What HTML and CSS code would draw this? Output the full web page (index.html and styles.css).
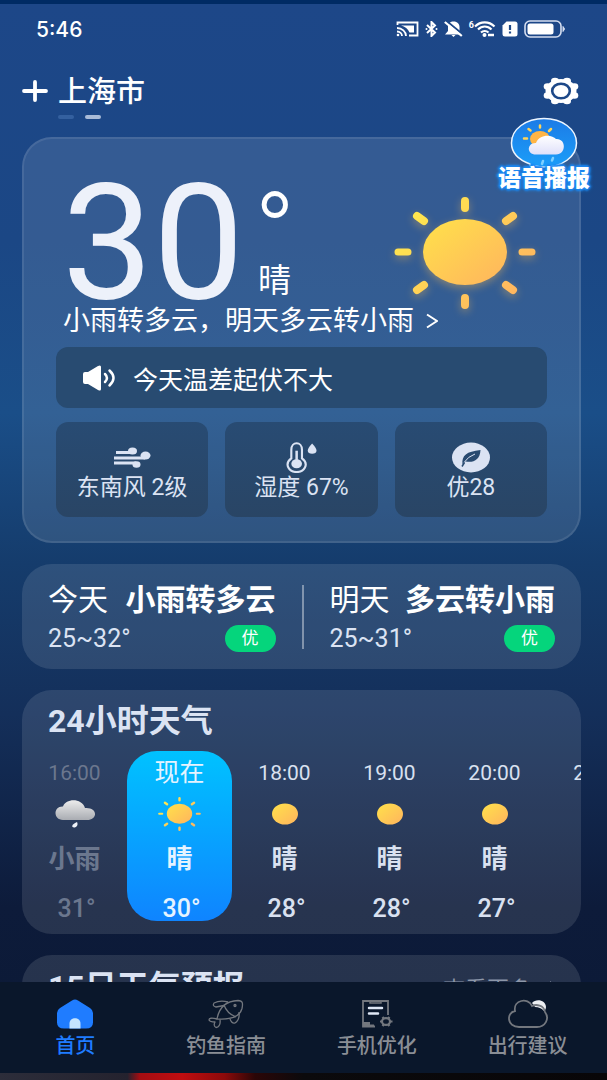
FILE: index.html
```html
<!DOCTYPE html>
<html lang="zh-CN">
<head>
  <title>上海市天气</title>
  <meta charset="UTF-8">
  <meta name="viewport" content="width=device-width, initial-scale=1">
  <link rel="stylesheet" href="styles.css">
</head>
<body>
  <!-- shared gradients and small icons -->
  <svg class="defs" width="0" height="0" aria-hidden="true">
    <defs>
      <linearGradient id="sunFill" x1="0" y1="0" x2="1" y2="1">
        <stop offset="0" stop-color="#ffe24a"/>
        <stop offset="1" stop-color="#ffb45e"/>
      </linearGradient>
      <linearGradient id="rayFill" gradientUnits="userSpaceOnUse" x1="20" y1="10" x2="120" y2="100">
        <stop offset="0" stop-color="#ffe84e"/>
        <stop offset="1" stop-color="#ffb660"/>
      </linearGradient>
      <linearGradient id="cloudFill" x1="0" y1="0" x2="0" y2="1">
        <stop offset="0" stop-color="#ececec"/>
        <stop offset="1" stop-color="#a9acb2"/>
      </linearGradient>
      <linearGradient id="whiteCloud" x1="0" y1="0" x2="0" y2="1">
        <stop offset="0" stop-color="#ffffff"/>
        <stop offset="1" stop-color="#dfe0fa"/>
      </linearGradient>
      <linearGradient id="bubbleFill" x1="0" y1="0" x2="0" y2="1">
        <stop offset="0" stop-color="#1c7be6"/>
        <stop offset="1" stop-color="#1ba0fa"/>
      </linearGradient>
    </defs>
    <symbol id="sun" viewBox="0 0 142 112">
      <g stroke="url(#rayFill)" stroke-linecap="round" stroke-width="8">
        <path d="M71 4v7M71 101v7"/>
        <path d="M4 55h10M128 55h10" stroke-width="7"/>
        <path d="M23 19l7 5M112 88l7 5M119 19l-7 5M30 88l-7 5"/>
      </g>
      <ellipse cx="71" cy="55" rx="42" ry="33" fill="url(#sunFill)"/>
    </symbol>
    <symbol id="sunDot" viewBox="0 0 26 21">
      <ellipse cx="13" cy="10.5" rx="13" ry="10.5" fill="url(#sunFill)"/>
    </symbol>
  </svg>

  <div class="screen">
    <div class="status-bar">
      <span class="clock">5:46</span>
      <div class="status-icons">
        <svg width="23" height="16" viewBox="0 0 23 16" fill="none" stroke="#fff" stroke-width="1.8">
          <path d="M1.500 4V1.500h20v13H13"/>
          <path d="M5 4.500h13v7h-4.500C12 8 9 5.500 5 4.500z" fill="#fff" stroke="none"/>
          <path d="M1 7c5 0 9 3.500 9 8M1 10.500c3 0 5 2 5 4.500" stroke-width="1.800"/>
          <circle cx="2" cy="14" r="1.300" fill="#fff" stroke="none"/>
        </svg>
        <svg width="13" height="16" viewBox="0 0 13 16" fill="none" stroke="#fff" stroke-width="2">
          <path d="M2 4l8 7.500L6.500 15V1L10 4.500 2 12"/>
          <circle cx="1.500" cy="8" r="1" fill="#fff" stroke="none"/>
          <circle cx="11.500" cy="8" r="1" fill="#fff" stroke="none"/>
        </svg>
        <svg width="19" height="16" viewBox="0 0 19 16">
          <path d="M9.500 .5c4 0 6 2.500 6 5.500v4l2.500 3.500H1L4 10V6c0-3 1.500-5.500 5.500-5.500z" fill="#fff"/>
          <path d="M7.500 14h4l-2 2z" fill="#fff"/>
          <path d="M2.500 0l17 14" stroke="#1d4888" stroke-width="2"/>
          <path d="M.8 1l17 14" stroke="#fff" stroke-width="2.200"/>
        </svg>
        <span class="wifi">
          <small>6</small>
          <svg width="22" height="16" viewBox="0 0 22 16" fill="none" stroke="#fff" stroke-width="2.200">
            <path d="M1 5.500c5.500-5.500 14-5.500 19.500 0M4 8.500c4-4 9.500-4 13.500 0M7 11.500c2.200-2 5.300-2 7.500 0"/>
            <circle cx="10.500" cy="14" r="2" fill="#fff" stroke="none"/>
            <path d="M14 14h6" stroke-width="2.500"/>
          </svg>
        </span>
        <svg width="16" height="16" viewBox="0 0 16 16">
          <path d="M4.500 .5h8.500q2.500 0 2.500 2.500v10q0 2.500-2.500 2.500H3Q.5 15.500.5 13V4.500z" fill="#fff"/>
          <path d="M8 4v5M8 10.500v2" stroke="#1d4888" stroke-width="2.200"/>
        </svg>
        <svg width="42" height="18" viewBox="0 0 42 18">
          <rect x="1" y="1" width="36" height="16" rx="5" fill="none" stroke="#d5def0" stroke-width="1.600"/>
          <rect x="3.500" y="3.500" width="26" height="11" rx="2.500" fill="#fff"/>
          <path d="M39 6.500q3 2.500 0 5z" fill="#d5def0" stroke="#d5def0"/>
        </svg>
      </div>
    </div>

    <header class="city-bar">
      <button class="icon-button" type="button" aria-label="添加城市">
        <svg width="26" height="22" viewBox="0 0 26 22" stroke="#fff" stroke-width="3.800" stroke-linecap="round">
          <path d="M13 2v18M2 11h22"/>
        </svg>
      </button>
      <div class="city">
        <h1>上海市</h1>
        <div class="pager"><i></i><i class="current"></i></div>
      </div>
      <button class="icon-button settings" type="button" aria-label="设置">
        <svg width="36" height="28" viewBox="0 0 36 28">
          <g fill="#fff">
            <ellipse cx="18" cy="14" rx="15.500" ry="12"/>
            <ellipse cx="12" cy="4" rx="4" ry="3.300"/>
            <ellipse cx="24" cy="4" rx="4" ry="3.300"/>
            <ellipse cx="31.500" cy="9.500" rx="3.800" ry="3.300"/>
            <ellipse cx="31.500" cy="18.500" rx="3.800" ry="3.300"/>
            <ellipse cx="24" cy="24" rx="4" ry="3.300"/>
            <ellipse cx="12" cy="24" rx="4" ry="3.300"/>
            <ellipse cx="4.500" cy="18.500" rx="3.800" ry="3.300"/>
            <ellipse cx="4.500" cy="9.500" rx="3.800" ry="3.300"/>
          </g>
          <ellipse cx="18" cy="14" rx="8.800" ry="7.300" fill="#fff" stroke="#1d4888" stroke-width="2.600"/>
        </svg>
      </button>
    </header>

    <button class="voice" type="button">
      <svg width="68" height="54" viewBox="0 0 68 54">
        <path d="M34 1.500C52 1.500 66.500 12 66.500 26S52 50 34 50q-5 0-8-1-3 4-7 4 2-3 1-6C9 43 1.500 36 1.500 26 1.500 12 16 1.500 34 1.500z" fill="url(#bubbleFill)" stroke="#eef6ff" stroke-width="1.500"/>
        <g stroke="#ffd45a" stroke-width="2.500" stroke-linecap="round">
          <path d="M30 8.500v2M18.500 12l2 1.500M41 12l-2 2M14 21.500h3"/>
        </g>
        <ellipse cx="30" cy="22" rx="10" ry="8" fill="#ffb545"/>
        <path d="M26 37.500c-10 0-9-12 0-11.500 3-9 16-9 20-4 10-1 11 15 0 15.500z" fill="url(#whiteCloud)"/>
        <path d="M33 44l-1 3M43 41l-1 2.500" stroke="#7fd0ff" stroke-width="2.500" stroke-linecap="round"/>
      </svg>
      <span>语音播报</span>
    </button>

    <main class="content">
      <section class="card now">
        <div class="now-top">
          <div class="temperature">30</div>
          <div class="now-side">
            <span class="degree">°</span>
            <span class="condition">晴</span>
          </div>
          <svg class="big-sun" width="142" height="112"><use href="#sun"/></svg>
        </div>
        <a class="summary" href="#">
          <span>小雨转多云，明天多云转小雨</span>
          <svg width="12" height="16" viewBox="0 0 12 16" fill="none" stroke="#fff" stroke-width="2"><path d="M1 1.500L11 8 1 14.500"/></svg>
        </a>
        <div class="tip">
          <svg width="34" height="26" viewBox="0 0 34 26">
            <path d="M1 9q0-2 2-2h3l10-6q3-1.500 3 1v22q0 2.500-3 1L6 19H3q-2 0-2-2z" fill="#fff"/>
            <path d="M23 9q4 4 0 8M27.500 5.500q8 7.500 0 15" fill="none" stroke="#fff" stroke-width="2.500" stroke-linecap="round"/>
          </svg>
          <span>今天温差起伏不大</span>
        </div>
        <div class="stats">
          <div class="stat">
            <svg width="38" height="30" viewBox="0 0 38 30" fill="none" stroke="#dbe3f3" stroke-width="3">
              <path d="M3 10h16M1 15.500h31M1 20.500h22"/>
              <g fill="#dbe3f3" stroke="none">
                <ellipse cx="19.500" cy="8.500" rx="4.500" ry="3.500"/>
                <ellipse cx="32.500" cy="13" rx="5" ry="4"/>
                <ellipse cx="23.500" cy="22" rx="4" ry="3.300"/>
              </g>
            </svg>
            <span>东南风 2级</span>
          </div>
          <div class="stat">
            <svg width="34" height="32" viewBox="0 0 34 32" fill="none" stroke="#dbe3f3" stroke-width="2.200">
              <path d="M7 17V8c0-9 11-9 11 0v9c8 6 2 14-5.500 14S-1 23 7 17z"/>
              <path d="M12.500 9v12" stroke-width="2.600"/>
              <ellipse cx="12.500" cy="22.500" rx="5.500" ry="4.700" fill="#dbe3f3" stroke="none"/>
              <path d="M28.500 1.500c7 7 5 10.500 0 10.500s-7-3.500 0-10.500z" fill="#dbe3f3" stroke="none"/>
            </svg>
            <span>湿度 67%</span>
          </div>
          <div class="stat">
            <svg width="38" height="30" viewBox="0 0 38 30">
              <ellipse cx="19" cy="15" rx="19" ry="15" fill="#dbe3f3"/>
              <path d="M10.500 22c-1-9 4-13 18-14.500-.5 10-7 13-15 11.500z" fill="#284a70"/>
              <path d="M12 20q4-6 11-8.500" fill="none" stroke="#dbe3f3" stroke-width="1"/>
              <path d="M10 24l2.500-4" stroke="#284a70" stroke-width="1.500"/>
            </svg>
            <span>优28</span>
          </div>
        </div>
      </section>

      <section class="card days">
        <div class="day">
          <div class="day-row"><span>今天</span><strong>小雨转多云</strong></div>
          <div class="day-row"><span class="range">25~32°</span><span class="badge">优</span></div>
        </div>
        <div class="day">
          <div class="day-row"><span>明天</span><strong>多云转小雨</strong></div>
          <div class="day-row"><span class="range">25~31°</span><span class="badge">优</span></div>
        </div>
      </section>

      <section class="card hourly">
        <h2>24小时天气</h2>
        <ul class="hours">
          <li class="past">
            <span class="time">16:00</span>
            <svg width="40" height="36" viewBox="0 0 40 36">
              <path d="M8 24C-2 24-2 10 8 10.500 11 2 27 2 30 12c13-1 13 12 2 12z" fill="url(#cloudFill)"/>
              <path d="M22 26c1.500 3-.5 5.500-3 5.500s-3-3 3-5.500z" fill="#eef2f8"/>
            </svg>
            <b>小雨</b>
            <span class="temp">31°</span>
          </li>
          <li class="present">
            <span class="time">现在</span>
            <svg width="43" height="36"><use href="#sun"/></svg>
            <b>晴</b>
            <span class="temp">30°</span>
          </li>
          <li>
            <span class="time">18:00</span>
            <svg width="26" height="36"><use href="#sunDot"/></svg>
            <b>晴</b>
            <span class="temp">28°</span>
          </li>
          <li>
            <span class="time">19:00</span>
            <svg width="26" height="36"><use href="#sunDot"/></svg>
            <b>晴</b>
            <span class="temp">28°</span>
          </li>
          <li>
            <span class="time">20:00</span>
            <svg width="26" height="36"><use href="#sunDot"/></svg>
            <b>晴</b>
            <span class="temp">27°</span>
          </li>
          <li>
            <span class="time">21:00</span>
          </li>
        </ul>
      </section>

      <section class="card forecast">
        <h2>15日天气预报</h2>
        <a href="#">查看更多
          <svg width="8" height="14" viewBox="0 0 8 14" fill="#8d97a9"><path d="M1 1l7 6-7 6z"/></svg>
        </a>
      </section>
    </main>

    <nav class="tabs">
      <a class="active" href="#">
        <svg width="36" height="30" viewBox="0 0 36 30">
          <path d="M15 1.500q3-2 6 0l12 7.500q3 2 3 5v9.500q0 6-7 6H7q-7 0-7-6V14q0-3 3-5z" fill="#1f7cff"/>
          <path d="M12.500 29.500v-5c0-7 11-7 11 0v5z" fill="#c5e4ff"/>
        </svg>
        <span>首页</span>
      </a>
      <a href="#">
        <svg width="36" height="30" viewBox="0 0 36 30" fill="none" stroke="#73777e" stroke-width="1.300" stroke-linejoin="round">
          <path d="M9 20C11 9 17 2 30 1.500c5 0 5 3 4 8C32 17 25 21 9 20z"/>
          <path d="M16 6.500L8 8Q4 7 6 4q6-3 14-1M16 6c2 6 7 10 12 12"/>
          <path d="M9 20q-8-2-8 1 1 2 6 2-2 4 1 5.500 5-1 4-8M22 20q2 5 5 4 5-3 4-11"/>
          <ellipse cx="27" cy="6.500" rx="1" ry="1"/>
        </svg>
        <span>钓鱼指南</span>
      </a>
      <a href="#">
        <svg width="32" height="30" viewBox="0 0 32 30" fill="none" stroke="#73777e" stroke-width="1.800">
          <path d="M27 16V2H2v25.500h12"/>
          <path d="M9 2v2h11V2" stroke-width="1.500"/>
          <path d="M2 23h7v2.500h4v2.500H2z" fill="#73777e" stroke="none"/>
          <path d="M8 9h13M8 14.500h9" stroke="#dfe7f5" stroke-width="2.500" stroke-linecap="round"/>
          <ellipse cx="25" cy="22.500" rx="4" ry="3.400" stroke-width="2.200"/>
          <path d="M21.500 18l1.500 2M28.500 18L27 20M19 22.500h2M29 22.500h2.500M21.500 27l1.500-2M28.500 27L27 25" stroke-width="2.200"/>
        </svg>
        <span>手机优化</span>
      </a>
      <a href="#">
        <svg width="40" height="30" viewBox="0 0 40 30" fill="none" stroke="#73777e" stroke-width="1.800">
          <path d="M24 4c4-5 14-3 14 4 0 2-1 3-2 4-3-3-5-4-9-4q-1-2-3-4z" fill="#eceef2" stroke="none"/>
          <path d="M11 28C-1 28-2 14 7 12 5 1 20-2 24 7c4-2 12-1 13 6 5 7 0 15-8 15z"/>
        </svg>
        <span>出行建议</span>
      </a>
    </nav>
    <div class="bottom-strip"></div>
  </div>
</body>
</html>
```

FILE: styles.css
```css
:root {
  --text: #ffffff;
  --text-soft: #dbe3f3;
  --text-muted: #8a8e95;
  --card-bg: rgba(255, 255, 255, 0.11);
  --box-bg: #284b71;
  --green: #05d57c;
  --blue: #1f7cff;
}
* {
  box-sizing: border-box;
}
body {
  margin: 0;
  font-family: Roboto, "Noto Sans CJK SC", sans-serif;
  color: var(--text);
  background: #0a162b;
}
h1, h2, ul {
  margin: 0;
  padding: 0;
}
svg {
  flex: none;
}
a {
  color: inherit;
  text-decoration: none;
}
button {
  padding: 0;
  border: none;
  background: none;
  color: inherit;
  font-family: inherit;
  cursor: pointer;
}
.defs {
  position: absolute;
}
.screen {
  position: relative;
  display: flex;
  flex-direction: column;
  height: 100vh;
  overflow: hidden;
  border-top: 4px solid #002b64;
  background: linear-gradient(#1d4788 0%, #1b4785 22%, #1a4e88 38%, #153c6c 52%, #142f5a 66%, #0d1b3a 84%, #0b1935 100%);
}

/* status bar and city */
.status-bar {
  display: flex;
  align-items: center;
  justify-content: space-between;
  height: 50px;
  padding: 0 41px 0 36px;
}
.clock {
  font-family: Inter, sans-serif;
  font-size: 21px;
  font-weight: 500;
}
.status-icons {
  display: flex;
  align-items: center;
  gap: 6px;
}
.wifi {
  display: flex;
  align-items: flex-start;
}
.wifi small {
  font-size: 9px;
  line-height: 8px;
  font-weight: 700;
}
.city-bar {
  display: flex;
  align-items: center;
  gap: 10px;
  height: 74px;
  padding: 0 28px 0 22px;
}
.icon-button {
  display: flex;
}
.settings {
  margin-left: auto;
}
.city {
  display: grid;
  gap: 2px;
  padding-top: 9px;
}
h1 {
  font-size: 29px;
  line-height: 41px;
  font-weight: 500;
}
.pager {
  display: flex;
  gap: 11px;
}
.pager i {
  width: 16px;
  height: 4px;
  border-radius: 2px;
  background: #34609f;
}
.pager .current {
  background: #a9bbd8;
}
.voice {
  position: absolute;
  z-index: 1;
  top: 113px;
  right: 17px;
  display: flex;
  flex-direction: column;
  align-items: center;
}
.voice svg {
  margin-bottom: -6px;
}
.voice span {
  font-size: 23px;
  line-height: 28px;
  font-weight: 900;
  text-shadow: 0 0 2px #1d86f0, 2px 0 2px #1d86f0, -2px 0 2px #1d86f0, 0 2px 2px #1d86f0, 0 -2px 2px #1d86f0, 0 0 5px #1d9cff;
}

/* cards */
.content {
  flex: 1;
  min-height: 0;
  display: flex;
  flex-direction: column;
  gap: 21px;
  padding: 9px 26px 0 22px;
  overflow: hidden;
}
.card {
  flex: none;
  border-radius: 30px;
  background: var(--card-bg);
}
.now {
  padding: 44px 32px 24px;
  border: 2px solid rgba(255, 255, 255, 0.09);
}
.now-top {
  display: flex;
  height: 124px;
  padding: 0 11px 0 6px;
}
.temperature {
  font-size: 162px;
  line-height: 120px;
  color: #edf1fa;
}
.now-side {
  display: flex;
  flex-direction: column;
  justify-content: space-between;
  align-items: flex-start;
  padding: 0 0 6px 10px;
}
.degree {
  height: 60px;
  font-size: 110px;
  line-height: 100px;
  font-weight: 300;
}
.condition {
  padding-left: 4px;
  font-size: 33px;
  line-height: 40px;
}
.big-sun {
  margin: 14px 0 0 auto;
  overflow: visible;
  filter: drop-shadow(0 3px 4px rgba(255, 190, 80, 0.4));
}
.summary {
  display: flex;
  align-items: center;
  gap: 12px;
  padding-left: 7px;
  font-size: 27px;
  line-height: 28px;
  white-space: nowrap;
}
.tip {
  display: flex;
  align-items: center;
  gap: 17px;
  height: 61px;
  margin-top: 12px;
  padding: 0 26px;
  border-radius: 12px;
  background: var(--box-bg);
  font-size: 25px;
}
.stats {
  display: grid;
  grid-template-columns: repeat(3, 1fr);
  gap: 17px;
  margin-top: 14px;
}
.stat {
  display: flex;
  flex-direction: column;
  align-items: center;
  height: 95px;
  padding-top: 20px;
  border-radius: 12px;
  background: linear-gradient(#284b73, #294565);
  color: var(--text-soft);
  font-size: 23px;
  line-height: 30px;
}
.stat svg {
  height: 31px;
}

/* today and tomorrow */
.days {
  display: grid;
  grid-template-columns: 1fr 1fr;
  padding: 21px 0 20px;
}
.day {
  display: grid;
  gap: 16px;
  padding: 0 26px;
}
.day + .day {
  border-left: 2px solid rgba(255, 255, 255, 0.4);
}
.day-row {
  display: flex;
  align-items: center;
  justify-content: space-between;
  height: 24px;
  font-size: 30px;
  white-space: nowrap;
}
.day-row + .day-row {
  align-items: flex-start;
}
.range {
  font-size: 25px;
  line-height: 28px;
  color: var(--text-soft);
}
.badge {
  padding: 0 17px;
  border-radius: 14px;
  background: var(--green);
  font-size: 17px;
  line-height: 27px;
}

/* hourly list */
h2 {
  font-size: 32px;
  line-height: 40px;
  font-weight: 700;
  color: var(--text-soft);
}
.hourly {
  padding: 11px 0 13px;
  overflow: hidden;
}
.hourly h2 {
  padding-left: 26px;
}
.hours {
  display: flex;
  margin-top: 10px;
  list-style: none;
}
.hours li {
  flex: none;
  display: flex;
  flex-direction: column;
  align-items: center;
  width: 105px;
  height: 170px;
  padding-top: 6px;
  border-radius: 30px;
  color: #d9e1f0;
}
.hours .past {
  color: #6b778e;
}
.hours .present {
  background: linear-gradient(#00c2ff, #0f84ff);
  color: #e5f3ff;
}
.time {
  font-size: 21px;
  line-height: 32px;
}
.present .time {
  font-size: 25px;
}
.hours svg {
  margin: 7px 0 9px;
}
.hours b {
  font-size: 26px;
  line-height: 36px;
}
.temp {
  margin-top: 16px;
  padding-left: 4px;
  font-size: 25px;
  line-height: 32px;
  font-weight: 500;
}
.forecast {
  display: flex;
  justify-content: space-between;
  padding: 12px 24px 60px 26px;
}
.forecast a {
  display: flex;
  align-items: center;
  gap: 18px;
  height: 40px;
  font-size: 22px;
  color: #8d97a9;
}

/* bottom tabs */
.tabs {
  display: grid;
  grid-template-columns: repeat(4, 1fr);
  height: 91px;
  padding-right: 4px;
  background: #0a172b;
}
.tabs a {
  display: flex;
  flex-direction: column;
  align-items: center;
  gap: 2px;
  padding-top: 17px;
  font-size: 20px;
  line-height: 30px;
  font-weight: 500;
  color: var(--text-muted);
}
.tabs .active {
  color: var(--blue);
}
.bottom-strip {
  height: 7px;
  background: linear-gradient(to right, #2c2d3a 0, #24222e 21%, #a30d12 23%, #c00d10 30%, #8c0a0a 37%, #2b0607 42%, #0b0a0c 50%, #080608 100%);
}
```
